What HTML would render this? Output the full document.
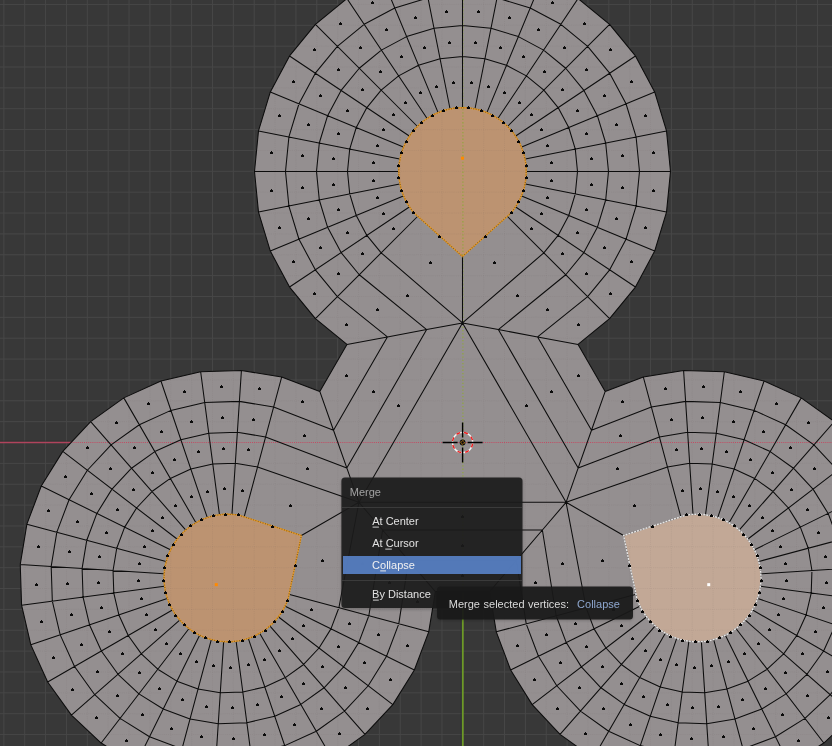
<!DOCTYPE html>
<html><head><meta charset="utf-8"><style>
html,body{margin:0;padding:0;background:#383838;width:832px;height:746px;overflow:hidden;}
svg{position:absolute;left:0;top:0;}
</style></head><body>
<svg width="832" height="746" viewBox="0 0 832 746">
<defs><filter id="sh" x="-10%" y="-10%" width="120%" height="120%"><feGaussianBlur stdDeviation="1.6"/></filter><clipPath id="mc"><path d="M578.06,344.45 L609.58,318.58 L635.45,287.06 L654.67,251.10 L666.50,212.08 L670.50,171.50 L666.50,130.92 L654.67,91.90 L635.45,55.94 L609.58,24.42 L578.06,-1.45 L542.10,-20.67 L503.08,-32.50 L462.50,-36.50 L421.92,-32.50 L382.90,-20.67 L346.94,-1.45 L315.42,24.42 L289.55,55.94 L270.33,91.90 L258.50,130.92 L254.50,171.50 L258.50,212.08 L270.33,251.10 L289.55,287.06 L315.42,318.58 L346.94,344.45 L319.80,391.45 L281.64,377.09 L241.41,370.45 L200.66,371.78 L160.95,381.04 L123.81,397.87 L90.66,421.62 L62.79,451.38 L41.26,486.00 L26.89,524.17 L20.25,564.40 L21.59,605.15 L30.85,644.86 L47.67,682.00 L71.42,715.14 L101.18,743.02 L135.81,764.55 L173.97,778.91 L214.20,785.55 L254.96,784.22 L294.67,774.96 L331.81,758.13 L364.95,734.38 L392.82,704.62 L414.36,670.00 L428.72,631.83 L435.36,591.60 L489.64,591.60 L496.28,631.83 L510.64,670.00 L532.18,704.62 L560.05,734.38 L593.19,758.13 L630.33,774.96 L670.04,784.22 L710.80,785.55 L751.03,778.91 L789.19,764.55 L823.82,743.02 L853.58,715.14 L877.33,682.00 L894.15,644.86 L903.41,605.15 L904.75,564.40 L898.11,524.17 L883.74,486.00 L862.21,451.38 L834.34,421.62 L801.19,397.87 L764.05,381.04 L724.34,371.78 L683.59,370.45 L643.36,377.09 L605.20,391.45Z"/></clipPath></defs>
<rect width="832" height="746" fill="#383838"/>
<path d="M3.88,0V746M24.74,0V746M45.60,0V746M66.46,0V746M87.32,0V746M108.18,0V746M129.04,0V746M149.90,0V746M170.76,0V746M191.62,0V746M212.48,0V746M233.34,0V746M254.20,0V746M275.06,0V746M295.92,0V746M316.78,0V746M337.64,0V746M358.50,0V746M379.36,0V746M400.22,0V746M421.08,0V746M441.94,0V746M462.80,0V746M483.66,0V746M504.52,0V746M525.38,0V746M546.24,0V746M567.10,0V746M587.96,0V746M608.82,0V746M629.68,0V746M650.54,0V746M671.40,0V746M692.26,0V746M713.12,0V746M733.98,0V746M754.84,0V746M775.70,0V746M796.56,0V746M817.42,0V746M0,4.44H832M0,25.30H832M0,46.16H832M0,67.02H832M0,87.88H832M0,108.74H832M0,129.60H832M0,150.46H832M0,171.32H832M0,192.18H832M0,213.04H832M0,233.90H832M0,254.76H832M0,275.62H832M0,296.48H832M0,317.34H832M0,338.20H832M0,359.06H832M0,379.92H832M0,400.78H832M0,421.64H832M0,442.50H832M0,463.36H832M0,484.22H832M0,505.08H832M0,525.94H832M0,546.80H832M0,567.66H832M0,588.52H832M0,609.38H832M0,630.24H832M0,651.10H832M0,671.96H832M0,692.82H832M0,713.68H832M0,734.54H832" stroke="#474747" stroke-width="1" fill="none"/>
<path d="M0,441.2H832" stroke="#2e3030" stroke-width="0.8"/><path d="M0,442.5H832" stroke="#b0435c" stroke-width="1.4"/>
<path d="M461.2,0V746" stroke="#2e2e33" stroke-width="0.8"/><path d="M462.8,0V746" stroke="#6d9a26" stroke-width="1.8"/>
<path d="M578.06,344.45 L609.58,318.58 L635.45,287.06 L654.67,251.10 L666.50,212.08 L670.50,171.50 L666.50,130.92 L654.67,91.90 L635.45,55.94 L609.58,24.42 L578.06,-1.45 L542.10,-20.67 L503.08,-32.50 L462.50,-36.50 L421.92,-32.50 L382.90,-20.67 L346.94,-1.45 L315.42,24.42 L289.55,55.94 L270.33,91.90 L258.50,130.92 L254.50,171.50 L258.50,212.08 L270.33,251.10 L289.55,287.06 L315.42,318.58 L346.94,344.45 L319.80,391.45 L281.64,377.09 L241.41,370.45 L200.66,371.78 L160.95,381.04 L123.81,397.87 L90.66,421.62 L62.79,451.38 L41.26,486.00 L26.89,524.17 L20.25,564.40 L21.59,605.15 L30.85,644.86 L47.67,682.00 L71.42,715.14 L101.18,743.02 L135.81,764.55 L173.97,778.91 L214.20,785.55 L254.96,784.22 L294.67,774.96 L331.81,758.13 L364.95,734.38 L392.82,704.62 L414.36,670.00 L428.72,631.83 L435.36,591.60 L489.64,591.60 L496.28,631.83 L510.64,670.00 L532.18,704.62 L560.05,734.38 L593.19,758.13 L630.33,774.96 L670.04,784.22 L710.80,785.55 L751.03,778.91 L789.19,764.55 L823.82,743.02 L853.58,715.14 L877.33,682.00 L894.15,644.86 L903.41,605.15 L904.75,564.40 L898.11,524.17 L883.74,486.00 L862.21,451.38 L834.34,421.62 L801.19,397.87 L764.05,381.04 L724.34,371.78 L683.59,370.45 L643.36,377.09 L605.20,391.45Z" fill="#948f90"/>
<path d="M511.97,212.10 L518.94,201.67 L523.74,190.08 L526.19,177.77 L526.19,165.23 L523.74,152.92 L518.94,141.33 L511.97,130.90 L503.10,122.03 L492.67,115.06 L481.08,110.26 L468.77,107.81 L456.23,107.81 L443.92,110.26 L432.33,115.06 L421.90,122.03 L413.03,130.90 L406.06,141.33 L401.26,152.92 L398.81,165.23 L398.81,177.77 L401.26,190.08 L406.06,201.67 L413.03,212.10 L462.50,256.50Z" fill="#bc9371"/><path d="M238.23,514.85 L225.71,514.03 L213.27,515.67 L201.39,519.70 L190.53,525.98 L181.10,534.25 L173.46,544.20 L167.91,555.46 L164.66,567.57 L163.84,580.09 L165.48,592.53 L169.51,604.41 L175.78,615.28 L184.06,624.71 L194.01,632.35 L205.26,637.90 L217.38,641.15 L229.90,641.97 L242.34,640.33 L254.22,636.30 L265.09,630.02 L274.52,621.75 L282.16,611.80 L287.71,600.54 L301.42,535.50Z" fill="#bc9371"/><path d="M637.29,600.54 L642.84,611.80 L650.48,621.75 L659.91,630.02 L670.78,636.30 L682.66,640.33 L695.10,641.97 L707.62,641.15 L719.74,637.90 L730.99,632.35 L740.94,624.71 L749.22,615.28 L755.49,604.41 L759.52,592.53 L761.16,580.09 L760.34,567.57 L757.09,555.46 L751.54,544.20 L743.90,534.25 L734.47,525.98 L723.61,519.70 L711.73,515.67 L699.29,514.03 L686.77,514.85 L623.58,535.50Z" fill="#c2a896"/>
<g clip-path="url(#mc)">
<path d="M3.88,0V746M24.74,0V746M45.60,0V746M66.46,0V746M87.32,0V746M108.18,0V746M129.04,0V746M149.90,0V746M170.76,0V746M191.62,0V746M212.48,0V746M233.34,0V746M254.20,0V746M275.06,0V746M295.92,0V746M316.78,0V746M337.64,0V746M358.50,0V746M379.36,0V746M400.22,0V746M421.08,0V746M441.94,0V746M483.66,0V746M504.52,0V746M525.38,0V746M546.24,0V746M567.10,0V746M587.96,0V746M608.82,0V746M629.68,0V746M650.54,0V746M671.40,0V746M692.26,0V746M713.12,0V746M733.98,0V746M754.84,0V746M775.70,0V746M796.56,0V746M817.42,0V746M0,4.44H832M0,25.30H832M0,46.16H832M0,67.02H832M0,87.88H832M0,108.74H832M0,129.60H832M0,150.46H832M0,171.32H832M0,192.18H832M0,213.04H832M0,233.90H832M0,254.76H832M0,275.62H832M0,296.48H832M0,317.34H832M0,338.20H832M0,359.06H832M0,379.92H832M0,400.78H832M0,421.64H832M0,463.36H832M0,484.22H832M0,505.08H832M0,525.94H832M0,546.80H832M0,567.66H832M0,588.52H832M0,609.38H832M0,630.24H832M0,651.10H832M0,671.96H832M0,692.82H832M0,713.68H832M0,734.54H832" stroke="#6a6566" stroke-opacity="0.1" stroke-width="1" fill="none" stroke-dasharray="1,1.1"/>
<path d="M0,442.5H832" stroke="#c44a62" stroke-width="1" stroke-dasharray="1,1.1"/>
<path d="M462.9,0V746" stroke="#8ea83a" stroke-opacity="0.85" stroke-width="1.3" stroke-dasharray="1.3,2"/>
</g>
<path d="M609.58,318.58L635.45,287.06M635.45,287.06L654.67,251.10M654.67,251.10L666.50,212.08M666.50,212.08L670.50,171.50M670.50,171.50L666.50,130.92M666.50,130.92L654.67,91.90M654.67,91.90L635.45,55.94M635.45,55.94L609.58,24.42M609.58,24.42L578.06,-1.45M578.06,-1.45L542.10,-20.67M542.10,-20.67L503.08,-32.50M503.08,-32.50L462.50,-36.50M462.50,-36.50L421.92,-32.50M421.92,-32.50L382.90,-20.67M382.90,-20.67L346.94,-1.45M346.94,-1.45L315.42,24.42M315.42,24.42L289.55,55.94M289.55,55.94L270.33,91.90M270.33,91.90L258.50,130.92M258.50,130.92L254.50,171.50M254.50,171.50L258.50,212.08M258.50,212.08L270.33,251.10M270.33,251.10L289.55,287.06M289.55,287.06L315.42,318.58M587.66,296.66L609.67,269.84M609.67,269.84L626.03,239.23M626.03,239.23L636.10,206.03M636.10,206.03L639.50,171.50M639.50,171.50L636.10,136.97M636.10,136.97L626.03,103.77M626.03,103.77L609.67,73.16M609.67,73.16L587.66,46.34M587.66,46.34L560.84,24.33M560.84,24.33L530.23,7.97M530.23,7.97L497.03,-2.10M497.03,-2.10L462.50,-5.50M462.50,-5.50L427.97,-2.10M427.97,-2.10L394.77,7.97M394.77,7.97L364.16,24.33M364.16,24.33L337.34,46.34M337.34,46.34L315.33,73.16M315.33,73.16L298.97,103.77M298.97,103.77L288.90,136.97M288.90,136.97L285.50,171.50M285.50,171.50L288.90,206.03M288.90,206.03L298.97,239.23M298.97,239.23L315.33,269.84M315.33,269.84L337.34,296.66M565.74,274.74L583.89,252.61M583.89,252.61L597.39,227.37M597.39,227.37L605.69,199.98M605.69,199.98L608.50,171.50M608.50,171.50L605.69,143.02M605.69,143.02L597.39,115.63M597.39,115.63L583.89,90.39M583.89,90.39L565.74,68.26M565.74,68.26L543.61,50.11M543.61,50.11L518.37,36.61M518.37,36.61L490.98,28.31M490.98,28.31L462.50,25.50M462.50,25.50L434.02,28.31M434.02,28.31L406.63,36.61M406.63,36.61L381.39,50.11M381.39,50.11L359.26,68.26M359.26,68.26L341.11,90.39M341.11,90.39L327.61,115.63M327.61,115.63L319.31,143.02M319.31,143.02L316.50,171.50M316.50,171.50L319.31,199.98M319.31,199.98L327.61,227.37M327.61,227.37L341.11,252.61M341.11,252.61L359.26,274.74M543.82,252.82L558.12,235.39M558.12,235.39L568.75,215.51M568.75,215.51L575.29,193.94M575.29,193.94L577.50,171.50M577.50,171.50L575.29,149.06M575.29,149.06L568.75,127.49M568.75,127.49L558.12,107.61M558.12,107.61L543.82,90.18M543.82,90.18L526.39,75.88M526.39,75.88L506.51,65.25M506.51,65.25L484.94,58.71M484.94,58.71L462.50,56.50M462.50,56.50L440.06,58.71M440.06,58.71L418.49,65.25M418.49,65.25L398.61,75.88M398.61,75.88L381.18,90.18M381.18,90.18L366.88,107.61M366.88,107.61L356.25,127.49M356.25,127.49L349.71,149.06M349.71,149.06L347.50,171.50M347.50,171.50L349.71,193.94M349.71,193.94L356.25,215.51M356.25,215.51L366.88,235.39M366.88,235.39L381.18,252.82M578.06,344.45L609.58,318.58M315.42,318.58L346.94,344.45M337.34,296.66L387.39,336.90M359.26,274.74L426.68,329.58M381.18,252.82L462.50,322.90M587.66,296.66L537.61,336.90M565.74,274.74L498.32,329.58M543.82,252.82L462.50,322.90M346.94,344.45L387.39,336.90M387.39,336.90L426.68,329.58M426.68,329.58L462.50,322.90M462.50,322.90L498.32,329.58M498.32,329.58L537.61,336.90M537.61,336.90L578.06,344.45M609.58,318.58L507.75,216.75M635.45,287.06L515.71,207.06M654.67,251.10L521.63,195.99M666.50,212.08L525.27,183.99M670.50,171.50L526.50,171.50M666.50,130.92L525.27,159.01M654.67,91.90L521.63,147.01M635.45,55.94L515.71,135.94M609.58,24.42L507.75,126.25M578.06,-1.45L498.06,118.29M542.10,-20.67L486.99,112.37M503.08,-32.50L474.99,108.73M462.50,-36.50L462.50,107.50M421.92,-32.50L450.01,108.73M382.90,-20.67L438.01,112.37M346.94,-1.45L426.94,118.29M315.42,24.42L417.25,126.25M289.55,55.94L409.29,135.94M270.33,91.90L403.37,147.01M258.50,130.92L399.73,159.01M254.50,171.50L398.50,171.50M258.50,212.08L399.73,183.99M270.33,251.10L403.37,195.99M289.55,287.06L409.29,207.06M315.42,318.58L417.25,216.75M462.50,256.50L462.50,322.90M346.94,344.45L319.80,391.45M387.39,336.90L333.50,430.25M426.68,329.58L346.80,467.94M462.50,322.90L358.92,502.30M281.64,377.09L241.41,370.45M241.41,370.45L200.66,371.78M200.66,371.78L160.95,381.04M160.95,381.04L123.81,397.87M123.81,397.87L90.66,421.62M90.66,421.62L62.79,451.38M62.79,451.38L41.26,486.00M41.26,486.00L26.89,524.17M26.89,524.17L20.25,564.40M20.25,564.40L21.59,605.15M21.59,605.15L30.85,644.86M30.85,644.86L47.67,682.00M47.67,682.00L71.42,715.14M71.42,715.14L101.18,743.02M101.18,743.02L135.81,764.55M135.81,764.55L173.97,778.91M173.97,778.91L214.20,785.55M214.20,785.55L254.96,784.22M254.96,784.22L294.67,774.96M294.67,774.96L331.81,758.13M331.81,758.13L364.95,734.38M364.95,734.38L392.82,704.62M392.82,704.62L414.36,670.00M414.36,670.00L428.72,631.83M273.62,407.03L239.38,401.38M239.38,401.38L204.70,402.51M204.70,402.51L170.91,410.39M170.91,410.39L139.31,424.71M139.31,424.71L111.10,444.92M111.10,444.92L87.38,470.25M87.38,470.25L69.06,499.71M69.06,499.71L56.84,532.19M56.84,532.19L51.19,566.42M51.19,566.42L52.32,601.10M52.32,601.10L60.20,634.89M60.20,634.89L74.52,666.50M74.52,666.50L94.73,694.70M94.73,694.70L120.06,718.42M120.06,718.42L149.52,736.75M149.52,736.75L182.00,748.97M182.00,748.97L216.23,754.62M216.23,754.62L250.91,753.49M250.91,753.49L284.70,745.61M284.70,745.61L316.31,731.29M316.31,731.29L344.51,711.08M344.51,711.08L368.23,685.75M368.23,685.75L386.55,656.29M386.55,656.29L398.78,623.81M265.59,436.97L237.36,432.31M237.36,432.31L208.75,433.25M208.75,433.25L180.88,439.75M180.88,439.75L154.81,451.56M154.81,451.56L131.54,468.23M131.54,468.23L111.98,489.12M111.98,489.12L96.86,513.43M96.86,513.43L86.78,540.21M86.78,540.21L82.12,568.45M82.12,568.45L83.06,597.06M83.06,597.06L89.56,624.93M89.56,624.93L101.37,651.00M101.37,651.00L118.04,674.26M118.04,674.26L138.93,693.83M138.93,693.83L163.23,708.94M163.23,708.94L190.02,719.03M190.02,719.03L218.26,723.69M218.26,723.69L246.86,722.75M246.86,722.75L274.74,716.25M274.74,716.25L300.81,704.44M300.81,704.44L324.07,687.77M324.07,687.77L343.64,666.88M343.64,666.88L358.75,642.57M358.75,642.57L368.83,615.79M257.57,466.92L235.33,463.25M235.33,463.25L212.80,463.98M212.80,463.98L190.84,469.10M190.84,469.10L170.31,478.41M170.31,478.41L151.98,491.54M151.98,491.54L136.57,507.99M136.57,507.99L124.67,527.14M124.67,527.14L116.73,548.24M116.73,548.24L113.05,570.48M113.05,570.48L113.79,593.01M113.79,593.01L118.91,614.97M118.91,614.97L128.21,635.50M128.21,635.50L141.35,653.82M141.35,653.82L157.80,669.24M157.80,669.24L176.94,681.14M176.94,681.14L198.04,689.08M198.04,689.08L220.29,692.75M220.29,692.75L242.82,692.02M242.82,692.02L264.77,686.90M264.77,686.90L285.31,677.59M285.31,677.59L303.63,664.46M303.63,664.46L319.04,648.01M319.04,648.01L330.95,628.86M330.95,628.86L338.89,607.76M319.80,391.45L281.64,377.09M428.72,631.83L435.36,591.60M398.78,623.81L408.61,560.35M368.83,615.79L382.62,529.98M338.89,607.76L358.92,502.30M273.62,407.03L333.50,430.25M265.59,436.97L346.80,467.94M257.57,466.92L358.92,502.30M435.36,591.60L408.61,560.35M408.61,560.35L382.62,529.98M382.62,529.98L358.92,502.30M358.92,502.30L346.80,467.94M346.80,467.94L333.50,430.25M333.50,430.25L319.80,391.45M281.64,377.09L244.37,516.18M241.41,370.45L231.99,514.14M200.66,371.78L219.45,514.55M160.95,381.04L207.23,517.40M123.81,397.87L195.81,522.57M90.66,421.62L185.61,529.88M62.79,451.38L177.03,539.04M41.26,486.00L170.41,549.69M26.89,524.17L165.99,561.44M20.25,564.40L163.94,573.81M21.59,605.15L164.35,586.35M30.85,644.86L167.20,598.57M47.67,682.00L172.38,610.00M71.42,715.14L179.69,620.20M101.18,743.02L188.85,628.77M135.81,764.55L199.50,635.40M173.97,778.91L211.24,639.82M214.20,785.55L223.62,641.86M254.96,784.22L236.16,641.45M294.67,774.96L248.38,638.60M331.81,758.13L259.81,633.43M364.95,734.38L270.01,626.12M392.82,704.62L278.58,616.96M414.36,670.00L285.21,606.31M428.72,631.83L289.63,594.56M301.42,535.50L358.92,502.30M435.36,591.60L489.64,591.60M408.61,560.35L516.39,560.35M382.62,529.98L542.38,529.98M358.92,502.30L566.08,502.30M496.28,631.83L510.64,670.00M510.64,670.00L532.18,704.62M532.18,704.62L560.05,734.38M560.05,734.38L593.19,758.13M593.19,758.13L630.33,774.96M630.33,774.96L670.04,784.22M670.04,784.22L710.80,785.55M710.80,785.55L751.03,778.91M751.03,778.91L789.19,764.55M789.19,764.55L823.82,743.02M823.82,743.02L853.58,715.14M853.58,715.14L877.33,682.00M877.33,682.00L894.15,644.86M894.15,644.86L903.41,605.15M903.41,605.15L904.75,564.40M904.75,564.40L898.11,524.17M898.11,524.17L883.74,486.00M883.74,486.00L862.21,451.38M862.21,451.38L834.34,421.62M834.34,421.62L801.19,397.87M801.19,397.87L764.05,381.04M764.05,381.04L724.34,371.78M724.34,371.78L683.59,370.45M683.59,370.45L643.36,377.09M526.22,623.81L538.45,656.29M538.45,656.29L556.77,685.75M556.77,685.75L580.49,711.08M580.49,711.08L608.69,731.29M608.69,731.29L640.30,745.61M640.30,745.61L674.09,753.49M674.09,753.49L708.77,754.62M708.77,754.62L743.00,748.97M743.00,748.97L775.48,736.75M775.48,736.75L804.94,718.42M804.94,718.42L830.27,694.70M830.27,694.70L850.48,666.50M850.48,666.50L864.80,634.89M864.80,634.89L872.68,601.10M872.68,601.10L873.81,566.42M873.81,566.42L868.16,532.19M868.16,532.19L855.94,499.71M855.94,499.71L837.62,470.25M837.62,470.25L813.90,444.92M813.90,444.92L785.69,424.71M785.69,424.71L754.09,410.39M754.09,410.39L720.30,402.51M720.30,402.51L685.62,401.38M685.62,401.38L651.38,407.03M556.17,615.79L566.25,642.57M566.25,642.57L581.36,666.88M581.36,666.88L600.93,687.77M600.93,687.77L624.19,704.44M624.19,704.44L650.26,716.25M650.26,716.25L678.14,722.75M678.14,722.75L706.74,723.69M706.74,723.69L734.98,719.03M734.98,719.03L761.77,708.94M761.77,708.94L786.07,693.83M786.07,693.83L806.96,674.26M806.96,674.26L823.63,651.00M823.63,651.00L835.44,624.93M835.44,624.93L841.94,597.06M841.94,597.06L842.88,568.45M842.88,568.45L838.22,540.21M838.22,540.21L828.14,513.43M828.14,513.43L813.02,489.12M813.02,489.12L793.46,468.23M793.46,468.23L770.19,451.56M770.19,451.56L744.12,439.75M744.12,439.75L716.25,433.25M716.25,433.25L687.64,432.31M687.64,432.31L659.41,436.97M586.11,607.76L594.05,628.86M594.05,628.86L605.96,648.01M605.96,648.01L621.37,664.46M621.37,664.46L639.69,677.59M639.69,677.59L660.23,686.90M660.23,686.90L682.18,692.02M682.18,692.02L704.71,692.75M704.71,692.75L726.96,689.08M726.96,689.08L748.06,681.14M748.06,681.14L767.20,669.24M767.20,669.24L783.65,653.82M783.65,653.82L796.79,635.50M796.79,635.50L806.09,614.97M806.09,614.97L811.21,593.01M811.21,593.01L811.95,570.48M811.95,570.48L808.27,548.24M808.27,548.24L800.33,527.14M800.33,527.14L788.43,507.99M788.43,507.99L773.02,491.54M773.02,491.54L754.69,478.41M754.69,478.41L734.16,469.10M734.16,469.10L712.20,463.98M712.20,463.98L689.67,463.25M689.67,463.25L667.43,466.92M489.64,591.60L496.28,631.83M643.36,377.09L605.20,391.45M651.38,407.03L591.50,430.25M659.41,436.97L578.20,467.94M667.43,466.92L566.08,502.30M526.22,623.81L516.39,560.35M556.17,615.79L542.38,529.98M586.11,607.76L566.08,502.30M605.20,391.45L591.50,430.25M591.50,430.25L578.20,467.94M578.20,467.94L566.08,502.30M566.08,502.30L542.38,529.98M542.38,529.98L516.39,560.35M516.39,560.35L489.64,591.60M496.28,631.83L635.37,594.56M510.64,670.00L639.79,606.31M532.18,704.62L646.42,616.96M560.05,734.38L654.99,626.12M593.19,758.13L665.19,633.43M630.33,774.96L676.62,638.60M670.04,784.22L688.84,641.45M710.80,785.55L701.38,641.86M751.03,778.91L713.76,639.82M789.19,764.55L725.50,635.40M823.82,743.02L736.15,628.77M853.58,715.14L745.31,620.20M877.33,682.00L752.62,610.00M894.15,644.86L757.80,598.57M903.41,605.15L760.65,586.35M904.75,564.40L761.06,573.81M898.11,524.17L759.01,561.44M883.74,486.00L754.59,549.69M862.21,451.38L747.97,539.04M834.34,421.62L739.39,529.88M801.19,397.87L729.19,522.57M764.05,381.04L717.77,517.40M724.34,371.78L705.55,514.55M683.59,370.45L693.01,514.14M643.36,377.09L680.63,516.18M623.58,535.50L566.08,502.30M605.20,391.45L578.06,344.45M591.50,430.25L537.61,336.90M578.20,467.94L498.32,329.58M566.08,502.30L462.50,322.90" stroke="#0c0c0c" stroke-width="1.05" fill="none"/>
<path d="M511.97,212.10 L518.94,201.67 L523.74,190.08 L526.19,177.77 L526.19,165.23 L523.74,152.92 L518.94,141.33 L511.97,130.90 L503.10,122.03 L492.67,115.06 L481.08,110.26 L468.77,107.81 L456.23,107.81 L443.92,110.26 L432.33,115.06 L421.90,122.03 L413.03,130.90 L406.06,141.33 L401.26,152.92 L398.81,165.23 L398.81,177.77 L401.26,190.08 L406.06,201.67 L413.03,212.10 L462.50,256.50Z" fill="none" stroke="#e59a28" stroke-width="1.4"/><path d="M511.97,212.10 L518.94,201.67 L523.74,190.08 L526.19,177.77 L526.19,165.23 L523.74,152.92 L518.94,141.33 L511.97,130.90 L503.10,122.03 L492.67,115.06 L481.08,110.26 L468.77,107.81 L456.23,107.81 L443.92,110.26 L432.33,115.06 L421.90,122.03 L413.03,130.90 L406.06,141.33 L401.26,152.92 L398.81,165.23 L398.81,177.77 L401.26,190.08 L406.06,201.67 L413.03,212.10 L462.50,256.50Z" fill="none" stroke="#3a2a10" stroke-opacity="0.55" stroke-width="1.2" stroke-dasharray="0.9,1.6"/><path d="M511,211h1v1h1v2h-3v-2h1zM518,200h1v1h1v2h-3v-2h1zM523,189h1v1h1v2h-3v-2h1zM526,176h1v1h1v2h-3v-2h1zM526,164h1v1h1v2h-3v-2h1zM523,151h1v1h1v2h-3v-2h1zM518,140h1v1h1v2h-3v-2h1zM511,129h1v1h1v2h-3v-2h1zM503,121h1v1h1v2h-3v-2h1zM492,114h1v1h1v2h-3v-2h1zM481,109h1v1h1v2h-3v-2h1zM468,106h1v1h1v2h-3v-2h1zM456,106h1v1h1v2h-3v-2h1zM443,109h1v1h1v2h-3v-2h1zM432,114h1v1h1v2h-3v-2h1zM421,121h1v1h1v2h-3v-2h1zM413,129h1v1h1v2h-3v-2h1zM406,140h1v1h1v2h-3v-2h1zM401,151h1v1h1v2h-3v-2h1zM398,164h1v1h1v2h-3v-2h1zM398,176h1v1h1v2h-3v-2h1zM401,189h1v1h1v2h-3v-2h1zM406,200h1v1h1v2h-3v-2h1zM413,211h1v1h1v2h-3v-2h1zM439,235h1v1h1v2h-3v-2h1zM485,235h1v1h1v2h-3v-2h1z" fill="#050505" shape-rendering="crispEdges"/><rect x="461.00" y="156.68" width="3" height="3" fill="#ff8a00"/><path d="M238.23,514.85 L225.71,514.03 L213.27,515.67 L201.39,519.70 L190.53,525.98 L181.10,534.25 L173.46,544.20 L167.91,555.46 L164.66,567.57 L163.84,580.09 L165.48,592.53 L169.51,604.41 L175.78,615.28 L184.06,624.71 L194.01,632.35 L205.26,637.90 L217.38,641.15 L229.90,641.97 L242.34,640.33 L254.22,636.30 L265.09,630.02 L274.52,621.75 L282.16,611.80 L287.71,600.54 L301.42,535.50Z" fill="none" stroke="#e59a28" stroke-width="1.4"/><path d="M238.23,514.85 L225.71,514.03 L213.27,515.67 L201.39,519.70 L190.53,525.98 L181.10,534.25 L173.46,544.20 L167.91,555.46 L164.66,567.57 L163.84,580.09 L165.48,592.53 L169.51,604.41 L175.78,615.28 L184.06,624.71 L194.01,632.35 L205.26,637.90 L217.38,641.15 L229.90,641.97 L242.34,640.33 L254.22,636.30 L265.09,630.02 L274.52,621.75 L282.16,611.80 L287.71,600.54 L301.42,535.50Z" fill="none" stroke="#3a2a10" stroke-opacity="0.55" stroke-width="1.2" stroke-dasharray="0.9,1.6"/><path d="M238,513h1v1h1v2h-3v-2h1zM225,513h1v1h1v2h-3v-2h1zM213,514h1v1h1v2h-3v-2h1zM201,518h1v1h1v2h-3v-2h1zM190,524h1v1h1v2h-3v-2h1zM181,533h1v1h1v2h-3v-2h1zM173,543h1v1h1v2h-3v-2h1zM167,554h1v1h1v2h-3v-2h1zM164,566h1v1h1v2h-3v-2h1zM163,579h1v1h1v2h-3v-2h1zM165,591h1v1h1v2h-3v-2h1zM169,603h1v1h1v2h-3v-2h1zM175,614h1v1h1v2h-3v-2h1zM184,623h1v1h1v2h-3v-2h1zM194,631h1v1h1v2h-3v-2h1zM205,636h1v1h1v2h-3v-2h1zM217,640h1v1h1v2h-3v-2h1zM229,640h1v1h1v2h-3v-2h1zM242,639h1v1h1v2h-3v-2h1zM254,635h1v1h1v2h-3v-2h1zM265,629h1v1h1v2h-3v-2h1zM274,620h1v1h1v2h-3v-2h1zM282,610h1v1h1v2h-3v-2h1zM287,599h1v1h1v2h-3v-2h1zM295,564h1v1h1v2h-3v-2h1zM272,525h1v1h1v2h-3v-2h1z" fill="#050505" shape-rendering="crispEdges"/><rect x="214.77" y="583.16" width="3" height="3" fill="#ff8a00"/><path d="M637.29,600.54 L642.84,611.80 L650.48,621.75 L659.91,630.02 L670.78,636.30 L682.66,640.33 L695.10,641.97 L707.62,641.15 L719.74,637.90 L730.99,632.35 L740.94,624.71 L749.22,615.28 L755.49,604.41 L759.52,592.53 L761.16,580.09 L760.34,567.57 L757.09,555.46 L751.54,544.20 L743.90,534.25 L734.47,525.98 L723.61,519.70 L711.73,515.67 L699.29,514.03 L686.77,514.85 L623.58,535.50Z" fill="none" stroke="#7a7574" stroke-width="1.3"/><path d="M637.29,600.54 L642.84,611.80 L650.48,621.75 L659.91,630.02 L670.78,636.30 L682.66,640.33 L695.10,641.97 L707.62,641.15 L719.74,637.90 L730.99,632.35 L740.94,624.71 L749.22,615.28 L755.49,604.41 L759.52,592.53 L761.16,580.09 L760.34,567.57 L757.09,555.46 L751.54,544.20 L743.90,534.25 L734.47,525.98 L723.61,519.70 L711.73,515.67 L699.29,514.03 L686.77,514.85 L623.58,535.50Z" fill="none" stroke="#e6e6e6" stroke-width="1.4" stroke-dasharray="2,1"/><path d="M637,599h1v1h1v2h-3v-2h1zM642,610h1v1h1v2h-3v-2h1zM650,620h1v1h1v2h-3v-2h1zM659,629h1v1h1v2h-3v-2h1zM670,635h1v1h1v2h-3v-2h1zM682,639h1v1h1v2h-3v-2h1zM695,640h1v1h1v2h-3v-2h1zM707,640h1v1h1v2h-3v-2h1zM719,636h1v1h1v2h-3v-2h1zM730,631h1v1h1v2h-3v-2h1zM740,623h1v1h1v2h-3v-2h1zM749,614h1v1h1v2h-3v-2h1zM755,603h1v1h1v2h-3v-2h1zM759,591h1v1h1v2h-3v-2h1zM761,579h1v1h1v2h-3v-2h1zM760,566h1v1h1v2h-3v-2h1zM757,554h1v1h1v2h-3v-2h1zM751,543h1v1h1v2h-3v-2h1zM743,533h1v1h1v2h-3v-2h1zM734,524h1v1h1v2h-3v-2h1zM723,518h1v1h1v2h-3v-2h1zM711,514h1v1h1v2h-3v-2h1zM699,513h1v1h1v2h-3v-2h1zM686,513h1v1h1v2h-3v-2h1zM652,525h1v1h1v2h-3v-2h1zM629,564h1v1h1v2h-3v-2h1z" fill="#050505" shape-rendering="crispEdges"/><rect x="707.23" y="583.16" width="3" height="3" fill="#ffffff"/>
<path d="M610,292h1v1h1v2h-3v-2h1zM631,260h1v1h1v2h-3v-2h1zM645,226h1v1h1v2h-3v-2h1zM653,189h1v1h1v2h-3v-2h1zM653,151h1v1h1v2h-3v-2h1zM645,114h1v1h1v2h-3v-2h1zM631,80h1v1h1v2h-3v-2h1zM610,48h1v1h1v2h-3v-2h1zM584,22h1v1h1v2h-3v-2h1zM552,1h1v1h1v2h-3v-2h1zM518,-13h1v1h1v2h-3v-2h1zM481,-21h1v1h1v2h-3v-2h1zM443,-21h1v1h1v2h-3v-2h1zM406,-13h1v1h1v2h-3v-2h1zM372,1h1v1h1v2h-3v-2h1zM340,22h1v1h1v2h-3v-2h1zM314,48h1v1h1v2h-3v-2h1zM293,80h1v1h1v2h-3v-2h1zM279,114h1v1h1v2h-3v-2h1zM271,151h1v1h1v2h-3v-2h1zM271,189h1v1h1v2h-3v-2h1zM279,226h1v1h1v2h-3v-2h1zM293,260h1v1h1v2h-3v-2h1zM314,292h1v1h1v2h-3v-2h1zM586,272h1v1h1v2h-3v-2h1zM604,246h1v1h1v2h-3v-2h1zM616,217h1v1h1v2h-3v-2h1zM622,186h1v1h1v2h-3v-2h1zM622,154h1v1h1v2h-3v-2h1zM616,123h1v1h1v2h-3v-2h1zM604,94h1v1h1v2h-3v-2h1zM586,68h1v1h1v2h-3v-2h1zM564,46h1v1h1v2h-3v-2h1zM538,28h1v1h1v2h-3v-2h1zM509,16h1v1h1v2h-3v-2h1zM478,10h1v1h1v2h-3v-2h1zM446,10h1v1h1v2h-3v-2h1zM415,16h1v1h1v2h-3v-2h1zM386,28h1v1h1v2h-3v-2h1zM360,46h1v1h1v2h-3v-2h1zM338,68h1v1h1v2h-3v-2h1zM320,94h1v1h1v2h-3v-2h1zM308,123h1v1h1v2h-3v-2h1zM302,154h1v1h1v2h-3v-2h1zM302,186h1v1h1v2h-3v-2h1zM308,217h1v1h1v2h-3v-2h1zM320,246h1v1h1v2h-3v-2h1zM338,272h1v1h1v2h-3v-2h1zM562,252h1v1h1v2h-3v-2h1zM577,231h1v1h1v2h-3v-2h1zM586,208h1v1h1v2h-3v-2h1zM591,183h1v1h1v2h-3v-2h1zM591,157h1v1h1v2h-3v-2h1zM586,132h1v1h1v2h-3v-2h1zM577,109h1v1h1v2h-3v-2h1zM562,88h1v1h1v2h-3v-2h1zM544,70h1v1h1v2h-3v-2h1zM523,55h1v1h1v2h-3v-2h1zM500,46h1v1h1v2h-3v-2h1zM475,41h1v1h1v2h-3v-2h1zM449,41h1v1h1v2h-3v-2h1zM424,46h1v1h1v2h-3v-2h1zM401,55h1v1h1v2h-3v-2h1zM380,70h1v1h1v2h-3v-2h1zM362,88h1v1h1v2h-3v-2h1zM347,109h1v1h1v2h-3v-2h1zM338,132h1v1h1v2h-3v-2h1zM333,157h1v1h1v2h-3v-2h1zM333,183h1v1h1v2h-3v-2h1zM338,208h1v1h1v2h-3v-2h1zM347,231h1v1h1v2h-3v-2h1zM362,252h1v1h1v2h-3v-2h1zM531,227h1v1h1v2h-3v-2h1zM541,212h1v1h1v2h-3v-2h1zM547,196h1v1h1v2h-3v-2h1zM551,179h1v1h1v2h-3v-2h1zM551,161h1v1h1v2h-3v-2h1zM547,144h1v1h1v2h-3v-2h1zM541,128h1v1h1v2h-3v-2h1zM531,113h1v1h1v2h-3v-2h1zM519,101h1v1h1v2h-3v-2h1zM504,91h1v1h1v2h-3v-2h1zM488,85h1v1h1v2h-3v-2h1zM471,81h1v1h1v2h-3v-2h1zM453,81h1v1h1v2h-3v-2h1zM436,85h1v1h1v2h-3v-2h1zM420,91h1v1h1v2h-3v-2h1zM405,101h1v1h1v2h-3v-2h1zM393,113h1v1h1v2h-3v-2h1zM383,128h1v1h1v2h-3v-2h1zM377,144h1v1h1v2h-3v-2h1zM373,161h1v1h1v2h-3v-2h1zM373,179h1v1h1v2h-3v-2h1zM377,196h1v1h1v2h-3v-2h1zM383,212h1v1h1v2h-3v-2h1zM393,227h1v1h1v2h-3v-2h1zM346,323h1v1h1v2h-3v-2h1zM377,308h1v1h1v2h-3v-2h1zM407,294h1v1h1v2h-3v-2h1zM430,261h1v1h1v2h-3v-2h1zM578,323h1v1h1v2h-3v-2h1zM547,308h1v1h1v2h-3v-2h1zM517,294h1v1h1v2h-3v-2h1zM494,261h1v1h1v2h-3v-2h1zM346,374h1v1h1v2h-3v-2h1zM373,390h1v1h1v2h-3v-2h1zM398,404h1v1h1v2h-3v-2h1zM259,387h1v1h1v2h-3v-2h1zM221,385h1v1h1v2h-3v-2h1zM184,390h1v1h1v2h-3v-2h1zM148,402h1v1h1v2h-3v-2h1zM116,421h1v1h1v2h-3v-2h1zM87,446h1v1h1v2h-3v-2h1zM65,475h1v1h1v2h-3v-2h1zM48,509h1v1h1v2h-3v-2h1zM38,545h1v1h1v2h-3v-2h1zM36,583h1v1h1v2h-3v-2h1zM41,620h1v1h1v2h-3v-2h1zM53,656h1v1h1v2h-3v-2h1zM72,688h1v1h1v2h-3v-2h1zM96,716h1v1h1v2h-3v-2h1zM126,739h1v1h1v2h-3v-2h1zM160,756h1v1h1v2h-3v-2h1zM196,766h1v1h1v2h-3v-2h1zM234,768h1v1h1v2h-3v-2h1zM271,763h1v1h1v2h-3v-2h1zM306,751h1v1h1v2h-3v-2h1zM339,732h1v1h1v2h-3v-2h1zM367,707h1v1h1v2h-3v-2h1zM390,678h1v1h1v2h-3v-2h1zM407,644h1v1h1v2h-3v-2h1zM253,418h1v1h1v2h-3v-2h1zM222,416h1v1h1v2h-3v-2h1zM191,420h1v1h1v2h-3v-2h1zM161,430h1v1h1v2h-3v-2h1zM134,446h1v1h1v2h-3v-2h1zM110,467h1v1h1v2h-3v-2h1zM91,492h1v1h1v2h-3v-2h1zM77,520h1v1h1v2h-3v-2h1zM69,550h1v1h1v2h-3v-2h1zM67,582h1v1h1v2h-3v-2h1zM71,613h1v1h1v2h-3v-2h1zM81,643h1v1h1v2h-3v-2h1zM97,670h1v1h1v2h-3v-2h1zM117,694h1v1h1v2h-3v-2h1zM142,713h1v1h1v2h-3v-2h1zM171,727h1v1h1v2h-3v-2h1zM201,735h1v1h1v2h-3v-2h1zM233,737h1v1h1v2h-3v-2h1zM264,733h1v1h1v2h-3v-2h1zM294,723h1v1h1v2h-3v-2h1zM321,707h1v1h1v2h-3v-2h1zM345,686h1v1h1v2h-3v-2h1zM364,661h1v1h1v2h-3v-2h1zM378,633h1v1h1v2h-3v-2h1zM248,448h1v1h1v2h-3v-2h1zM223,447h1v1h1v2h-3v-2h1zM198,450h1v1h1v2h-3v-2h1zM174,458h1v1h1v2h-3v-2h1zM152,471h1v1h1v2h-3v-2h1zM133,488h1v1h1v2h-3v-2h1zM117,508h1v1h1v2h-3v-2h1zM106,531h1v1h1v2h-3v-2h1zM99,555h1v1h1v2h-3v-2h1zM98,581h1v1h1v2h-3v-2h1zM101,606h1v1h1v2h-3v-2h1zM109,630h1v1h1v2h-3v-2h1zM122,652h1v1h1v2h-3v-2h1zM139,671h1v1h1v2h-3v-2h1zM159,687h1v1h1v2h-3v-2h1zM182,698h1v1h1v2h-3v-2h1zM206,705h1v1h1v2h-3v-2h1zM232,706h1v1h1v2h-3v-2h1zM257,703h1v1h1v2h-3v-2h1zM281,695h1v1h1v2h-3v-2h1zM303,682h1v1h1v2h-3v-2h1zM322,665h1v1h1v2h-3v-2h1zM338,645h1v1h1v2h-3v-2h1zM349,622h1v1h1v2h-3v-2h1zM242,489h1v1h1v2h-3v-2h1zM224,487h1v1h1v2h-3v-2h1zM207,490h1v1h1v2h-3v-2h1zM191,495h1v1h1v2h-3v-2h1zM175,504h1v1h1v2h-3v-2h1zM162,516h1v1h1v2h-3v-2h1zM152,529h1v1h1v2h-3v-2h1zM144,545h1v1h1v2h-3v-2h1zM139,562h1v1h1v2h-3v-2h1zM138,579h1v1h1v2h-3v-2h1zM141,597h1v1h1v2h-3v-2h1zM146,613h1v1h1v2h-3v-2h1zM155,628h1v1h1v2h-3v-2h1zM166,642h1v1h1v2h-3v-2h1zM180,652h1v1h1v2h-3v-2h1zM196,660h1v1h1v2h-3v-2h1zM213,664h1v1h1v2h-3v-2h1zM230,666h1v1h1v2h-3v-2h1zM248,663h1v1h1v2h-3v-2h1zM264,658h1v1h1v2h-3v-2h1zM279,649h1v1h1v2h-3v-2h1zM292,637h1v1h1v2h-3v-2h1zM303,624h1v1h1v2h-3v-2h1zM311,608h1v1h1v2h-3v-2h1zM417,600h1v1h1v2h-3v-2h1zM389,581h1v1h1v2h-3v-2h1zM362,562h1v1h1v2h-3v-2h1zM322,559h1v1h1v2h-3v-2h1zM302,400h1v1h1v2h-3v-2h1zM304,434h1v1h1v2h-3v-2h1zM307,467h1v1h1v2h-3v-2h1zM290,504h1v1h1v2h-3v-2h1zM462,574h1v1h1v2h-3v-2h1zM462,544h1v1h1v2h-3v-2h1zM462,515h1v1h1v2h-3v-2h1zM517,644h1v1h1v2h-3v-2h1zM534,678h1v1h1v2h-3v-2h1zM557,707h1v1h1v2h-3v-2h1zM585,732h1v1h1v2h-3v-2h1zM618,751h1v1h1v2h-3v-2h1zM653,763h1v1h1v2h-3v-2h1zM690,768h1v1h1v2h-3v-2h1zM728,766h1v1h1v2h-3v-2h1zM764,756h1v1h1v2h-3v-2h1zM798,739h1v1h1v2h-3v-2h1zM828,716h1v1h1v2h-3v-2h1zM852,688h1v1h1v2h-3v-2h1zM871,656h1v1h1v2h-3v-2h1zM883,620h1v1h1v2h-3v-2h1zM888,583h1v1h1v2h-3v-2h1zM886,545h1v1h1v2h-3v-2h1zM876,509h1v1h1v2h-3v-2h1zM859,475h1v1h1v2h-3v-2h1zM837,446h1v1h1v2h-3v-2h1zM808,421h1v1h1v2h-3v-2h1zM776,402h1v1h1v2h-3v-2h1zM740,390h1v1h1v2h-3v-2h1zM703,385h1v1h1v2h-3v-2h1zM665,387h1v1h1v2h-3v-2h1zM546,633h1v1h1v2h-3v-2h1zM560,661h1v1h1v2h-3v-2h1zM579,686h1v1h1v2h-3v-2h1zM603,707h1v1h1v2h-3v-2h1zM630,723h1v1h1v2h-3v-2h1zM660,733h1v1h1v2h-3v-2h1zM691,737h1v1h1v2h-3v-2h1zM723,735h1v1h1v2h-3v-2h1zM753,727h1v1h1v2h-3v-2h1zM782,713h1v1h1v2h-3v-2h1zM807,694h1v1h1v2h-3v-2h1zM827,670h1v1h1v2h-3v-2h1zM843,643h1v1h1v2h-3v-2h1zM853,613h1v1h1v2h-3v-2h1zM857,582h1v1h1v2h-3v-2h1zM855,550h1v1h1v2h-3v-2h1zM847,520h1v1h1v2h-3v-2h1zM833,492h1v1h1v2h-3v-2h1zM814,467h1v1h1v2h-3v-2h1zM790,446h1v1h1v2h-3v-2h1zM763,430h1v1h1v2h-3v-2h1zM733,420h1v1h1v2h-3v-2h1zM702,416h1v1h1v2h-3v-2h1zM671,418h1v1h1v2h-3v-2h1zM575,622h1v1h1v2h-3v-2h1zM586,645h1v1h1v2h-3v-2h1zM602,665h1v1h1v2h-3v-2h1zM621,682h1v1h1v2h-3v-2h1zM643,695h1v1h1v2h-3v-2h1zM667,703h1v1h1v2h-3v-2h1zM692,706h1v1h1v2h-3v-2h1zM718,705h1v1h1v2h-3v-2h1zM742,698h1v1h1v2h-3v-2h1zM765,687h1v1h1v2h-3v-2h1zM785,671h1v1h1v2h-3v-2h1zM802,652h1v1h1v2h-3v-2h1zM815,630h1v1h1v2h-3v-2h1zM823,606h1v1h1v2h-3v-2h1zM826,581h1v1h1v2h-3v-2h1zM825,555h1v1h1v2h-3v-2h1zM818,531h1v1h1v2h-3v-2h1zM807,508h1v1h1v2h-3v-2h1zM791,488h1v1h1v2h-3v-2h1zM772,471h1v1h1v2h-3v-2h1zM750,458h1v1h1v2h-3v-2h1zM726,450h1v1h1v2h-3v-2h1zM701,447h1v1h1v2h-3v-2h1zM676,448h1v1h1v2h-3v-2h1zM613,608h1v1h1v2h-3v-2h1zM621,624h1v1h1v2h-3v-2h1zM632,637h1v1h1v2h-3v-2h1zM645,649h1v1h1v2h-3v-2h1zM660,658h1v1h1v2h-3v-2h1zM676,663h1v1h1v2h-3v-2h1zM694,666h1v1h1v2h-3v-2h1zM711,664h1v1h1v2h-3v-2h1zM728,660h1v1h1v2h-3v-2h1zM744,652h1v1h1v2h-3v-2h1zM758,642h1v1h1v2h-3v-2h1zM769,628h1v1h1v2h-3v-2h1zM778,613h1v1h1v2h-3v-2h1zM783,597h1v1h1v2h-3v-2h1zM786,579h1v1h1v2h-3v-2h1zM785,562h1v1h1v2h-3v-2h1zM780,545h1v1h1v2h-3v-2h1zM772,529h1v1h1v2h-3v-2h1zM762,516h1v1h1v2h-3v-2h1zM749,504h1v1h1v2h-3v-2h1zM733,495h1v1h1v2h-3v-2h1zM717,490h1v1h1v2h-3v-2h1zM700,487h1v1h1v2h-3v-2h1zM682,489h1v1h1v2h-3v-2h1zM622,400h1v1h1v2h-3v-2h1zM620,434h1v1h1v2h-3v-2h1zM617,467h1v1h1v2h-3v-2h1zM634,504h1v1h1v2h-3v-2h1zM507,600h1v1h1v2h-3v-2h1zM535,581h1v1h1v2h-3v-2h1zM562,562h1v1h1v2h-3v-2h1zM602,559h1v1h1v2h-3v-2h1zM578,374h1v1h1v2h-3v-2h1zM551,390h1v1h1v2h-3v-2h1zM526,404h1v1h1v2h-3v-2h1z" fill="#0a0a0a" shape-rendering="crispEdges"/>
<g transform="translate(462.6,442.5)">
<circle r="10.1" fill="none" stroke="#f4f4f4" stroke-width="1.4"/>
<circle r="10.1" fill="none" stroke="#ee1c1c" stroke-width="1.4" stroke-dasharray="3.966,3.966" stroke-dashoffset="6.75"/>
<path d="M-20,0H-5M5,0H20M0,-20V-5M0,5V20" stroke="#000" stroke-width="1.4"/>
<circle r="2.9" fill="#0a0a0a"/>
<circle r="1.7" fill="none" stroke="#e69a1e" stroke-width="1" stroke-dasharray="1.4,0.9"/>
</g>
<g font-family="Liberation Sans, sans-serif" font-size="11" opacity="0.995">
<rect x="341.4" y="478.4" width="181.1" height="131" rx="4" fill="#000" fill-opacity="0.22" filter="url(#sh)"/>
<rect x="341.4" y="477.4" width="181.1" height="130.5" rx="3.5" fill="#1c1c1c" fill-opacity="0.92"/>
<rect x="342" y="507" width="180" height="1" fill="#3b3b3b"/>
<rect x="343" y="556" width="178" height="18" fill="#5379b9"/>
<rect x="342" y="580" width="180" height="1" fill="#3b3b3b"/>
<text x="349.8" y="496" fill="#a3a3a3">Merge</text>
<text x="372.2" y="525" fill="#e2e2e2">At Center</text>
<text x="372.2" y="547" fill="#e2e2e2">At Cursor</text>
<text x="372.1" y="569" fill="#f2f2f2">Collapse</text>
<text x="372.1" y="598" fill="#e2e2e2">By Distance</text>
<rect x="372.6" y="526.6" width="6.3" height="1" fill="#cfcfcf"/>
<rect x="385.3" y="548.6" width="6.5" height="1" fill="#cfcfcf"/>
<rect x="380.2" y="570.4" width="5.8" height="1" fill="#e8e8e8"/>
<rect x="373" y="599.6" width="5.8" height="1" fill="#cfcfcf"/>
<rect x="437" y="587.6" width="196" height="33" rx="4" fill="#000" fill-opacity="0.22" filter="url(#sh)"/>
<rect x="437" y="586.6" width="196" height="33" rx="3.5" fill="#1a1a1a" fill-opacity="0.93"/>
<text x="448.8" y="607.7" fill="#dcdcdc" word-spacing="0.5">Merge selected vertices:</text>
<text x="577.1" y="607.7" fill="#8ea7cf">Collapse</text>
</g>
</svg>
</body></html>
